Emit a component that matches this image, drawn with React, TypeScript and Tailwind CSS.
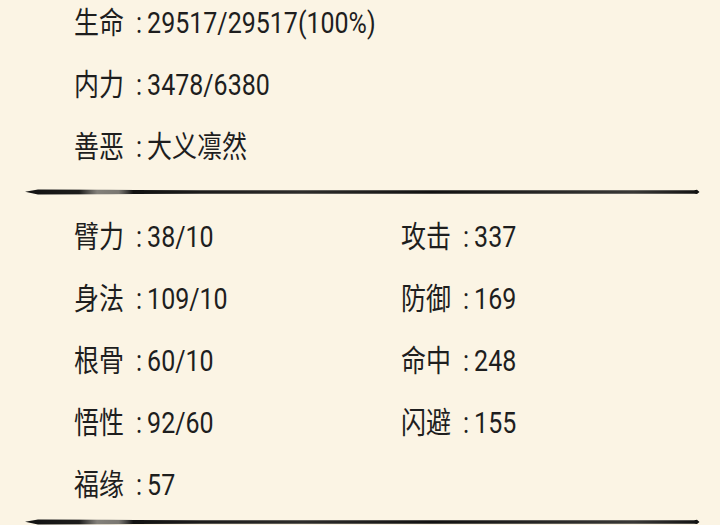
import React from "react";

const font = { fontFamily: "Roboto, 'Noto Sans CJK SC', sans-serif" };

function Stat({ label, value }: { label: string; value: string }) {
  return (
    <div className="flex h-[62px] items-center whitespace-nowrap text-[25px] leading-none text-[#1e1e1e]">
      <span className="inline-block scale-y-[1.17]">{label}</span>
      <span className="ml-[12px] mr-[5px] inline-block scale-y-[1.17]">:</span>
      <span className="inline-block scale-y-[1.17]">{value}</span>
    </div>
  );
}

function Divider({ id }: { id: string }) {
  return (
    <svg width="720" height="10" viewBox="0 0 720 10" className="block">
      <defs>
        <linearGradient id={id} x1="0" y1="0" x2="720" y2="0" gradientUnits="userSpaceOnUse">
          <stop offset="0.035" stopColor="#111" stopOpacity="1" />
          <stop offset="0.11" stopColor="#111" stopOpacity="0.95" />
          <stop offset="0.135" stopColor="#333" stopOpacity="0.6" />
          <stop offset="0.165" stopColor="#333" stopOpacity="0.65" />
          <stop offset="0.185" stopColor="#111" stopOpacity="1" />
          <stop offset="0.42" stopColor="#1a1a1a" stopOpacity="0.92" />
          <stop offset="0.6" stopColor="#111" stopOpacity="1" />
          <stop offset="0.88" stopColor="#222" stopOpacity="0.9" />
          <stop offset="0.97" stopColor="#111" stopOpacity="1" />
        </linearGradient>
      </defs>
      <path
        d="M25 4.8 L38 2.6 L110 2.8 L135 3.0 L200 3.2 L694 3.2 L697 2.7 L699.5 4.9 L697 7.1 L694 6.7 L200 6.7 L135 7.0 L110 7.2 L38 7.4 Z"
        fill={`url(#${id})`}
      />
    </svg>
  );
}

export default function App() {
  return (
    <div className="h-[525px] w-[720px] overflow-hidden bg-[#fbf4e4]" style={font}>
      <div className="-mt-[8px] pl-[74px]">
        <Stat label="生命" value="29517/29517(100%)" />
        <Stat label="内力" value="3478/6380" />
        <Stat label="善恶" value="大义凛然" />
      </div>
      <div className="flex h-[28px] items-center">
        <Divider id="g1" />
      </div>
      <div className="grid grid-cols-[327px_1fr] pl-[74px]">
        <Stat label="臂力" value="38/10" />
        <Stat label="攻击" value="337" />
        <Stat label="身法" value="109/10" />
        <Stat label="防御" value="169" />
        <Stat label="根骨" value="60/10" />
        <Stat label="命中" value="248" />
        <Stat label="悟性" value="92/60" />
        <Stat label="闪避" value="155" />
        <Stat label="福缘" value="57" />
      </div>
      <div className="pt-[1px]">
        <Divider id="g2" />
      </div>
    </div>
  );
}
